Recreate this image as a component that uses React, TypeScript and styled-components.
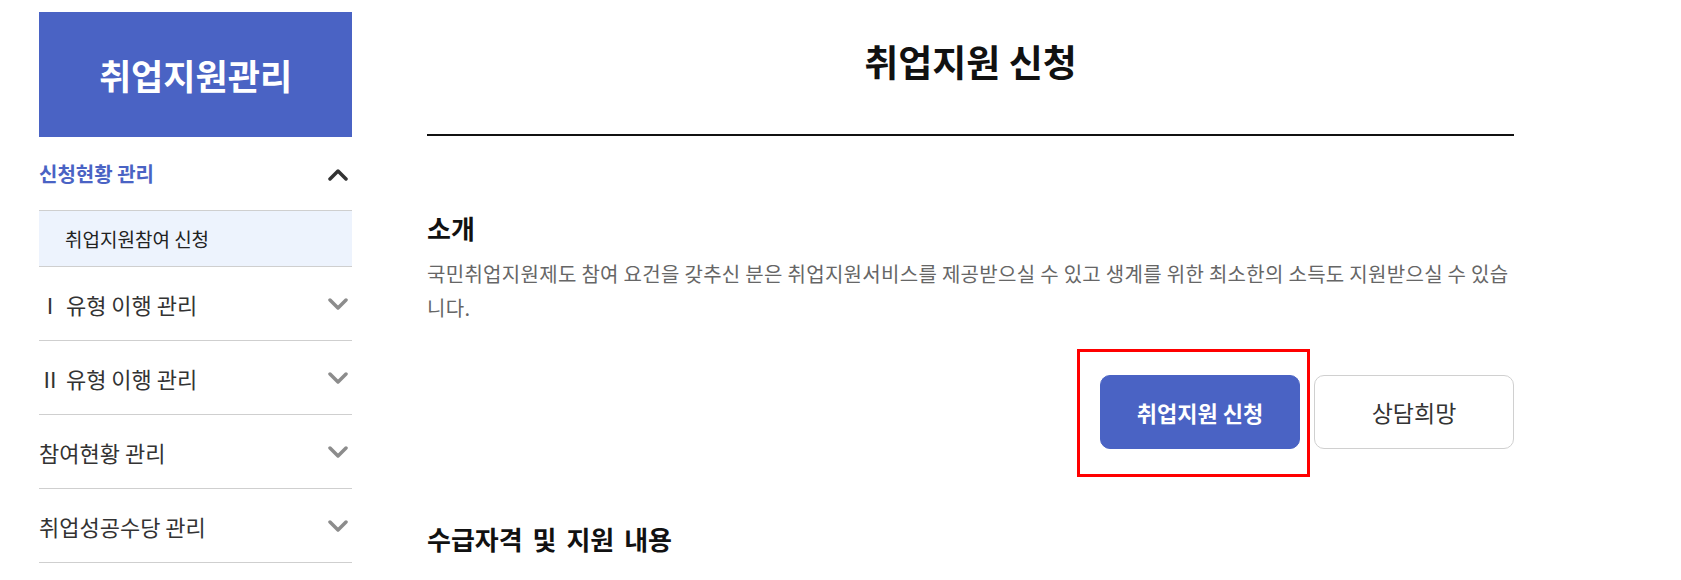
import React from 'react';
import styled, { createGlobalStyle } from 'styled-components';

const BLUE = '#4a63c4';
const FONT = `"Noto Sans CJK KR", "Noto Sans", sans-serif`;

const GlobalStyle = createGlobalStyle`
  body {
    margin: 0;
    background: #fff;
    font-family: ${FONT};
    color: #222;
  }
`;

interface MenuItem {
  label: string
  open?: boolean
  children?: string[]
}

const menuItems: MenuItem[] = [
  { label: '신청현황 관리', open: true, children: ['취업지원참여 신청'] },
  { label: 'Ⅰ 유형 이행 관리' },
  { label: 'Ⅱ 유형 이행 관리' },
  { label: '참여현황 관리' },
  { label: '취업성공수당 관리' },
];

function Chevron({ up }: { up?: boolean }) {
  return (
    <ChevronSvg viewBox="0 0 20 14" $up={up}>
      <polyline points={up ? '2,12 10,4 18,12' : '2,3 10,11 18,3'} />
    </ChevronSvg>
  );
}

export default function App() {
  return (
    <>
      <GlobalStyle />
      <Page>
        <Sidebar>
          <SideTitle>취업지원관리</SideTitle>
          <Menu>
            {menuItems.map(item => (
              <li key={item.label}>
                <MenuRow $active={item.open}>
                  <span>{item.label}</span>
                  <Chevron up={item.open} />
                </MenuRow>
                {item.open && item.children?.map(child => (
                  <SubRow key={child}>{child}</SubRow>
                ))}
              </li>
            ))}
          </Menu>
        </Sidebar>

        <Main>
          <PageTitle>취업지원 신청</PageTitle>
          <Section>
            <SectionTitle>소개</SectionTitle>
            <Desc>
              국민취업지원제도 참여 요건을 갖추신 분은 취업지원서비스를 제공받으실 수 있고 생계를 위한 최소한의 소득도 지원받으실 수 있습니다.
            </Desc>
            <ButtonRow>
              <Highlight>
                <Button $primary>취업지원 신청</Button>
              </Highlight>
              <Button>상담희망</Button>
            </ButtonRow>
          </Section>
          <Section>
            <SectionTitle>수급자격 및 지원 내용</SectionTitle>
          </Section>
        </Main>
      </Page>
    </>
  );
}

const Page = styled.div`
  display: flex;
  align-items: flex-start;
  width: 1681px;
  height: 580px;
  overflow: hidden;
`

const Sidebar = styled.aside`
  width: 313px;
  margin: 12px 0 0 39px;
  flex-shrink: 0;
`

const SideTitle = styled.h2`
  display: flex;
  align-items: center;
  justify-content: center;
  height: 125px;
  margin: 0;
  background: ${BLUE};
  color: #fff;
  font-size: 35px;
  font-weight: 700;
`

const Menu = styled.ul`
  list-style: none;
  margin: 0;
  padding: 0;
`

const MenuRow = styled.div<{ $active?: boolean }>`
  display: flex;
  align-items: center;
  justify-content: space-between;
  height: 73px;
  padding-right: 4px;
  border-bottom: 1px solid #cfcfcf;
  font-size: ${p => (p.$active ? 20 : 22)}px;
  font-weight: ${p => (p.$active ? 700 : 400)};
  color: ${p => (p.$active ? BLUE : '#333')};
`

const SubRow = styled.div`
  display: flex;
  align-items: center;
  height: 55px;
  padding-left: 26px;
  background: #edf3fd;
  border-bottom: 1px solid #cfcfcf;
  font-size: 19px;
  color: #222;
`

const ChevronSvg = styled.svg<{ $up?: boolean }>`
  width: 20px;
  height: 14px;
  fill: none;
  stroke: ${p => (p.$up ? '#333' : '#8c8c8c')};
  stroke-width: 3.5;
  stroke-linecap: round;
  stroke-linejoin: round;
`

const Main = styled.main`
  width: 1087px;
  margin-left: 75px;
  flex-shrink: 0;
`

const PageTitle = styled.h1`
  margin: 0;
  padding: 38px 0 50px;
  border-bottom: 2px solid #111;
  text-align: center;
  font-size: 37px;
  line-height: 46px;
  font-weight: 700;
  color: #111;
`

const Section = styled.section`
  margin-top: 76px;

  & + & {
    margin-top: 74px;
  }
`

const SectionTitle = styled.h3`
  margin: 0;
  font-size: 26px;
  line-height: 32px;
  font-weight: 700;
  word-spacing: 4px;
  color: #111;
`

const Desc = styled.p`
  margin: 13px 0 0;
  font-size: 20px;
  line-height: 34px;
  letter-spacing: 0.3px;
  color: #666;
`

const ButtonRow = styled.div`
  display: flex;
  justify-content: flex-end;
  gap: 14px;
  margin-top: 50px;
`

const Highlight = styled.div`
  position: relative;

  &::after {
    content: '';
    position: absolute;
    top: -26px;
    left: -23px;
    right: -10px;
    bottom: -28px;
    border: 3px solid #f00;
    pointer-events: none;
  }
`

const Button = styled.button<{ $primary?: boolean }>`
  display: flex;
  align-items: center;
  justify-content: center;
  width: 200px;
  height: 74px;
  padding: 0;
  border-radius: 10px;
  border: 1px solid ${p => (p.$primary ? BLUE : '#d0d0d0')};
  background: ${p => (p.$primary ? BLUE : '#fff')};
  color: ${p => (p.$primary ? '#fff' : '#333')};
  font-family: ${FONT};
  font-size: ${p => (p.$primary ? 22 : 23)}px;
  font-weight: ${p => (p.$primary ? 700 : 400)};
  cursor: pointer;
`
